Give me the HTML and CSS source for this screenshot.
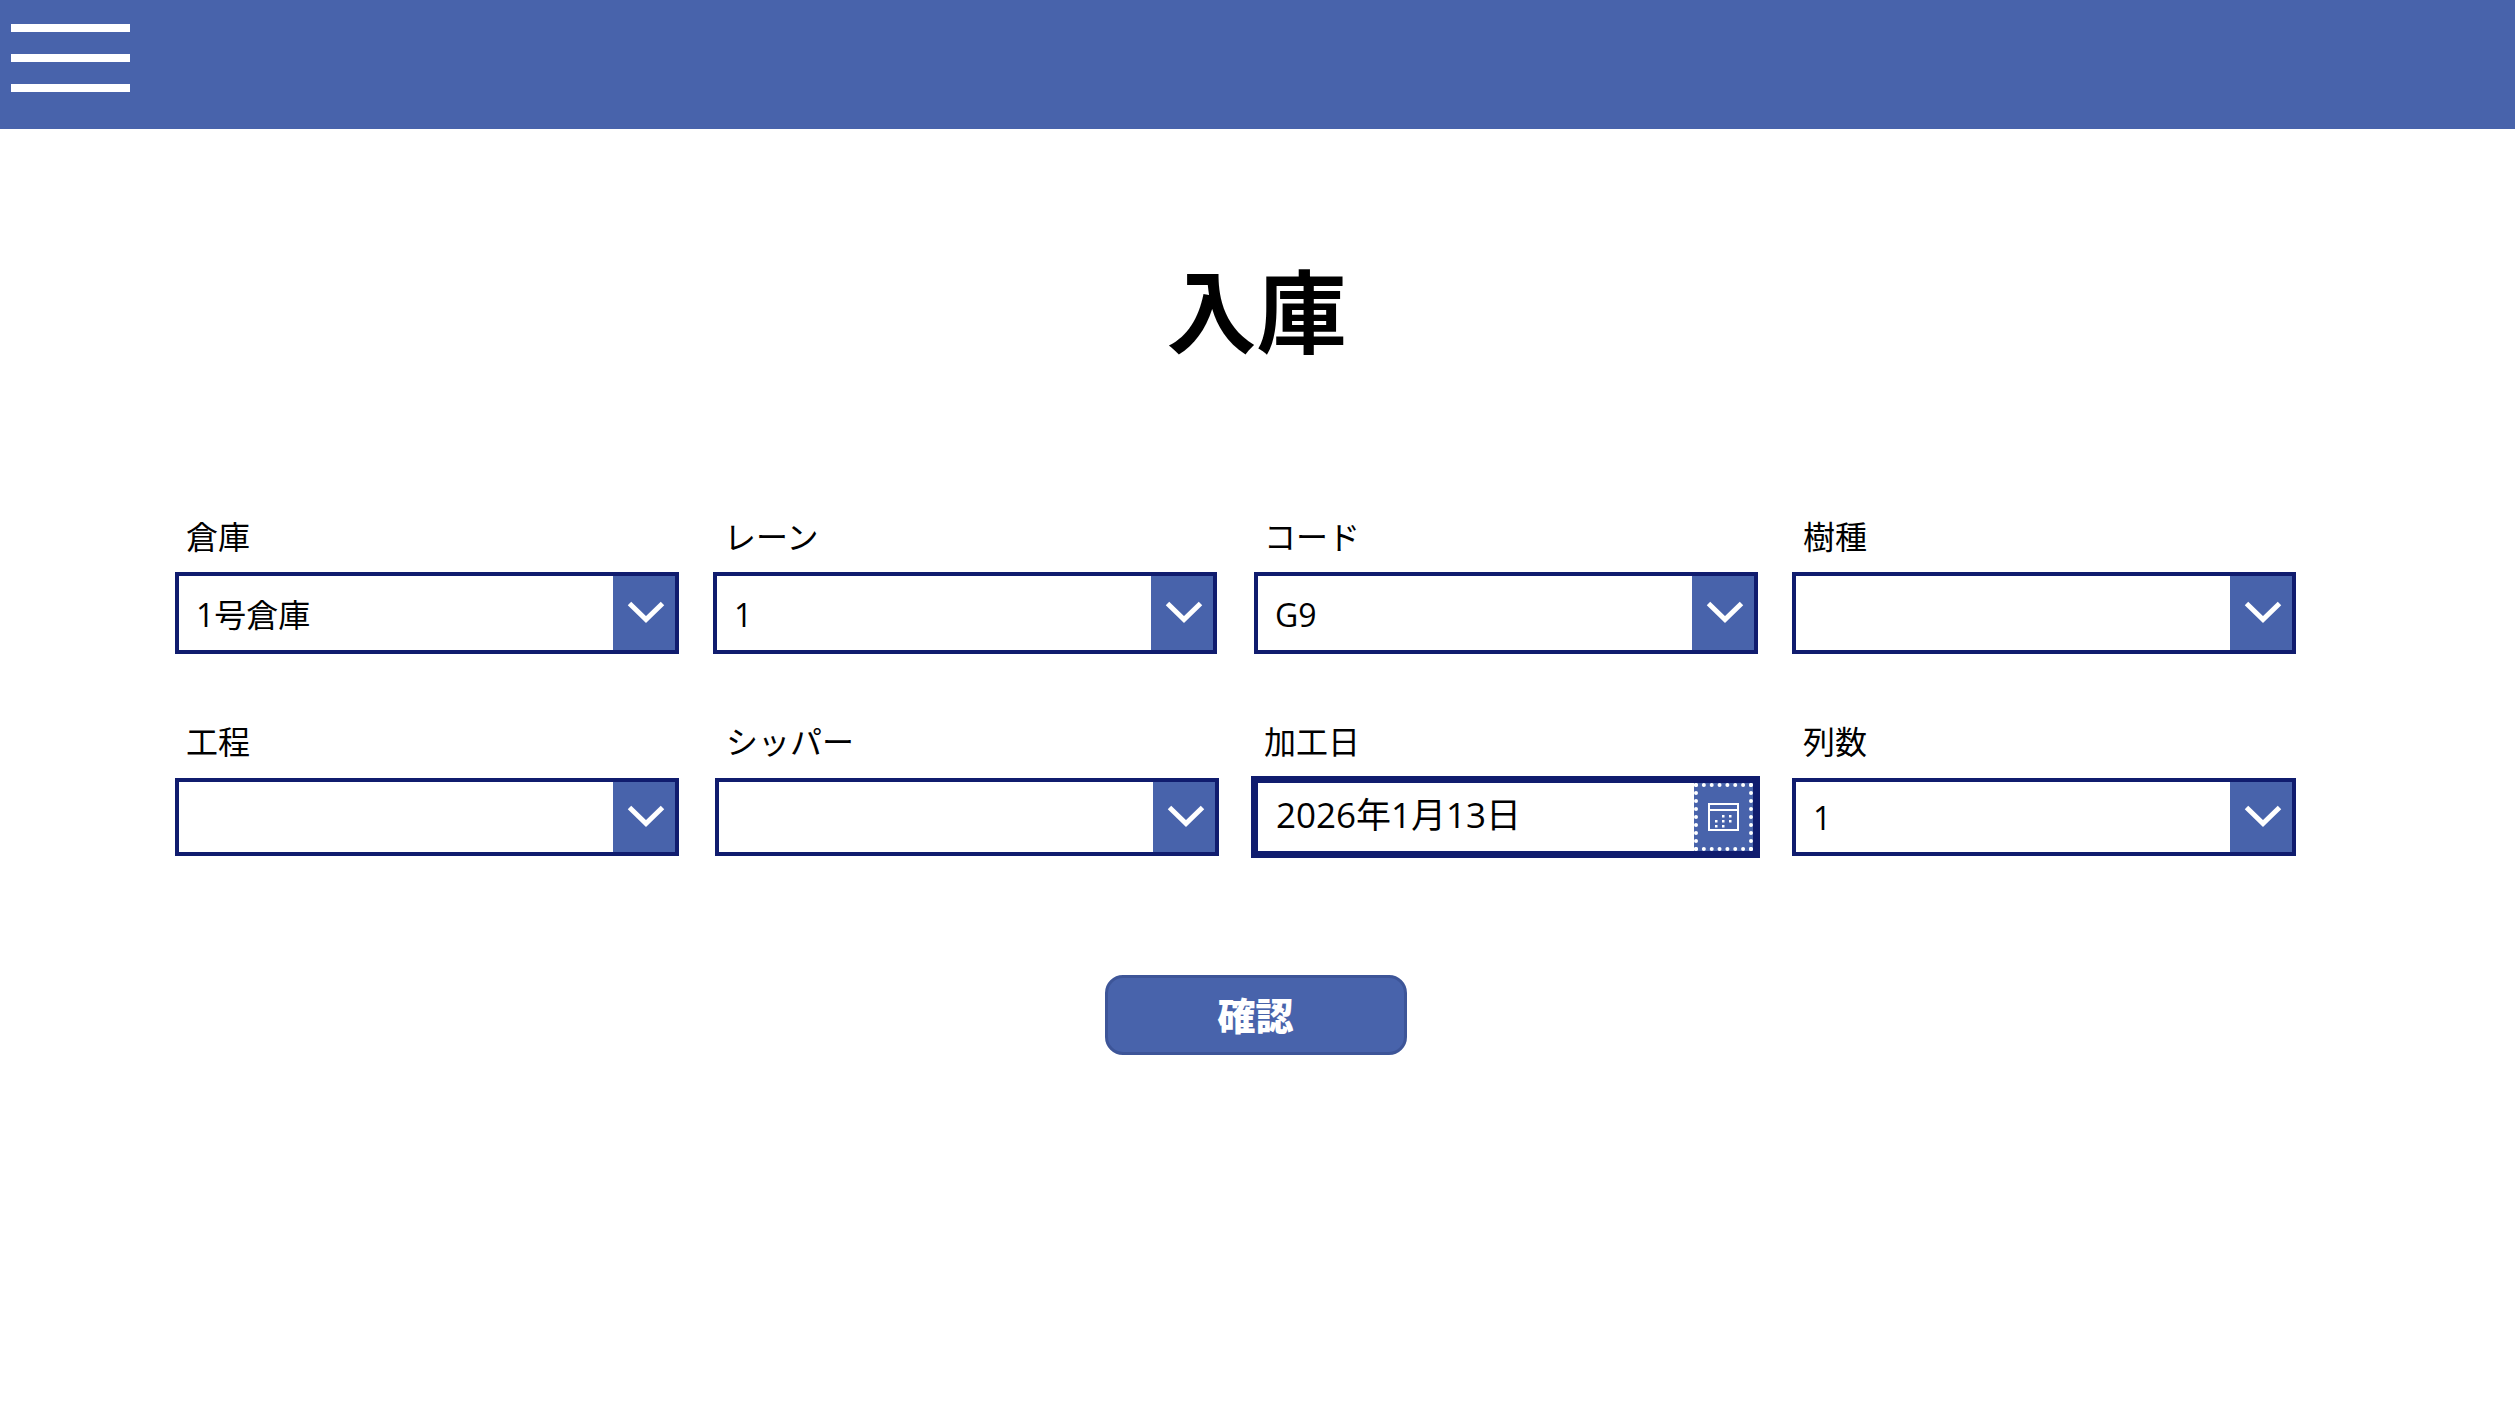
FILE: index.html
```html
<!DOCTYPE html>
<html lang="ja">
	<head>
		<meta charset="UTF-8" />
		<title>入庫</title>
		<link rel="stylesheet" href="styles.css">
	</head>

	<body>
		<header class="topbar">
			<button class="menu" aria-label="メニュー">
				<span></span>
				<span></span>
				<span></span>
			</button>
		</header>

		<main>
			<h1 class="title">入庫</h1>

			<form class="form">
				<div class="field">
					<label>倉庫</label>
					<div class="select">
						<span class="value">1号倉庫</span>
						<span class="arrow"><svg viewBox="0 0 38 22"><path d="M2.500 2.500 19 18.500 35.500 2.500" /></svg></span>
					</div>
				</div>
				<div class="field">
					<label>レーン</label>
					<div class="select">
						<span class="value">1</span>
						<span class="arrow"><svg viewBox="0 0 38 22"><path d="M2.500 2.500 19 18.500 35.500 2.500" /></svg></span>
					</div>
				</div>
				<div class="field middle">
					<label>コード</label>
					<div class="select">
						<span class="value">G9</span>
						<span class="arrow"><svg viewBox="0 0 38 22"><path d="M2.500 2.500 19 18.500 35.500 2.500" /></svg></span>
					</div>
				</div>
				<div class="field">
					<label>樹種</label>
					<div class="select">
						<span class="value"></span>
						<span class="arrow"><svg viewBox="0 0 38 22"><path d="M2.500 2.500 19 18.500 35.500 2.500" /></svg></span>
					</div>
				</div>

				<div class="field low">
					<label>工程</label>
					<div class="select">
						<span class="value"></span>
						<span class="arrow"><svg viewBox="0 0 38 22"><path d="M2.500 2.500 19 18.500 35.500 2.500" /></svg></span>
					</div>
				</div>
				<div class="field low shifted">
					<label>シッパー</label>
					<div class="select">
						<span class="value"></span>
						<span class="arrow"><svg viewBox="0 0 38 22"><path d="M2.500 2.500 19 18.500 35.500 2.500" /></svg></span>
					</div>
				</div>
				<div class="field low middle">
					<label>加工日</label>
					<div class="date">
						<span class="date-value">2026年1月13日</span>
						<span class="date-button">
							<svg viewBox="0 0 31 28">
								<rect x="1" y="1" width="29" height="26" />
								<path d="M1 7H30" />
								<g class="dots">
									<rect x="14" y="12" width="2.500" height="2.500" />
									<rect x="21" y="12" width="2.500" height="2.500" />
									<rect x="7" y="17" width="2.500" height="2.500" />
									<rect x="14" y="17" width="2.500" height="2.500" />
									<rect x="21" y="17" width="2.500" height="2.500" />
									<rect x="7" y="22" width="2.500" height="2.500" />
									<rect x="14" y="22" width="2.500" height="2.500" />
								</g>
							</svg>
						</span>
					</div>
				</div>
				<div class="field low">
					<label>列数</label>
					<div class="select">
						<span class="value">1</span>
						<span class="arrow"><svg viewBox="0 0 38 22"><path d="M2.500 2.500 19 18.500 35.500 2.500" /></svg></span>
					</div>
				</div>
			</form>

			<div class="actions">
				<button type="button" class="confirm">確認</button>
			</div>
		</main>
	</body>
</html>
```

FILE: styles.css
```css
body {
	margin: 0;
	background-color: #fff;
	color: #000;
	font-family: "Open Sans", "Noto Sans CJK JP", sans-serif;
	overflow: hidden;
}
.topbar {
	height: 129px;
	background-color: #4863ab;
}
.menu {
	display: flex;
	flex-direction: column;
	gap: 22px;
	padding: 24px 0 0 11px;
	border: 0;
	background: none;
}
.menu span {
	display: block;
	width: 119px;
	height: 8px;
	background-color: #fff;
}
.title {
	margin: 118px 2px 0 0;
	font-family: "Noto Sans CJK JP", sans-serif;
	font-size: 90px;
	font-weight: 700;
	line-height: 120px;
	text-align: center;
}
.form {
	display: grid;
	grid-template-columns: 538px 541px 538px 504px;
	row-gap: 65px;
	margin: 147px 0 0 175px;
}
.field {
	width: 504px;
}
.field label {
	display: block;
	height: 46px;
	margin-bottom: 12px;
	padding-left: 11px;
	font-size: 32px;
	line-height: 46px;
}
.middle label {
	padding-left: 10px;
}
.select {
	display: flex;
	box-sizing: border-box;
	height: 82px;
	border: 4px solid #101c6e;
}
.low label {
	margin-bottom: 13px;
}
.low .select {
	height: 78px;
}
.low .value {
	line-height: 72px;
}
.shifted {
	margin-left: 2px;
}
.value {
	flex: 1;
	padding-left: 17px;
	font-size: 32px;
	line-height: 77px;
}
.arrow {
	display: flex;
	align-items: center;
	justify-content: center;
	box-sizing: border-box;
	width: 62px;
	padding: 0 0 2px 3px;
	background-color: #4863ab;
}
.arrow svg {
	width: 38px;
	height: 22px;
	fill: none;
	stroke: #fff;
	stroke-width: 5;
}
.date {
	display: flex;
	box-sizing: border-box;
	height: 82px;
	margin: -2px -2px 0 -3px;
	border: 7px solid #101c6e;
}
.date-value {
	flex: 1;
	padding-left: 18px;
	font-size: 35px;
	line-height: 63px;
}
.date-button {
	display: flex;
	align-items: center;
	justify-content: center;
	box-sizing: border-box;
	width: 59px;
	border: 4px dotted #fff;
	background-color: #4863ab;
}
.date-button svg {
	width: 31px;
	height: 28px;
	fill: none;
	stroke: #fff;
	stroke-width: 2;
}
.date-button .dots rect {
	fill: #fff;
	stroke: none;
}
.actions {
	display: flex;
	justify-content: center;
	margin: 117px 4px 0 0;
}
.confirm {
	box-sizing: border-box;
	width: 302px;
	height: 80px;
	padding-bottom: 5px;
	border: 3px solid #3d5598;
	border-radius: 18px;
	background-color: #4863ab;
	color: #fff;
	font-family: "Noto Sans CJK JP", sans-serif;
	font-size: 38px;
	font-weight: 900;
}
```
